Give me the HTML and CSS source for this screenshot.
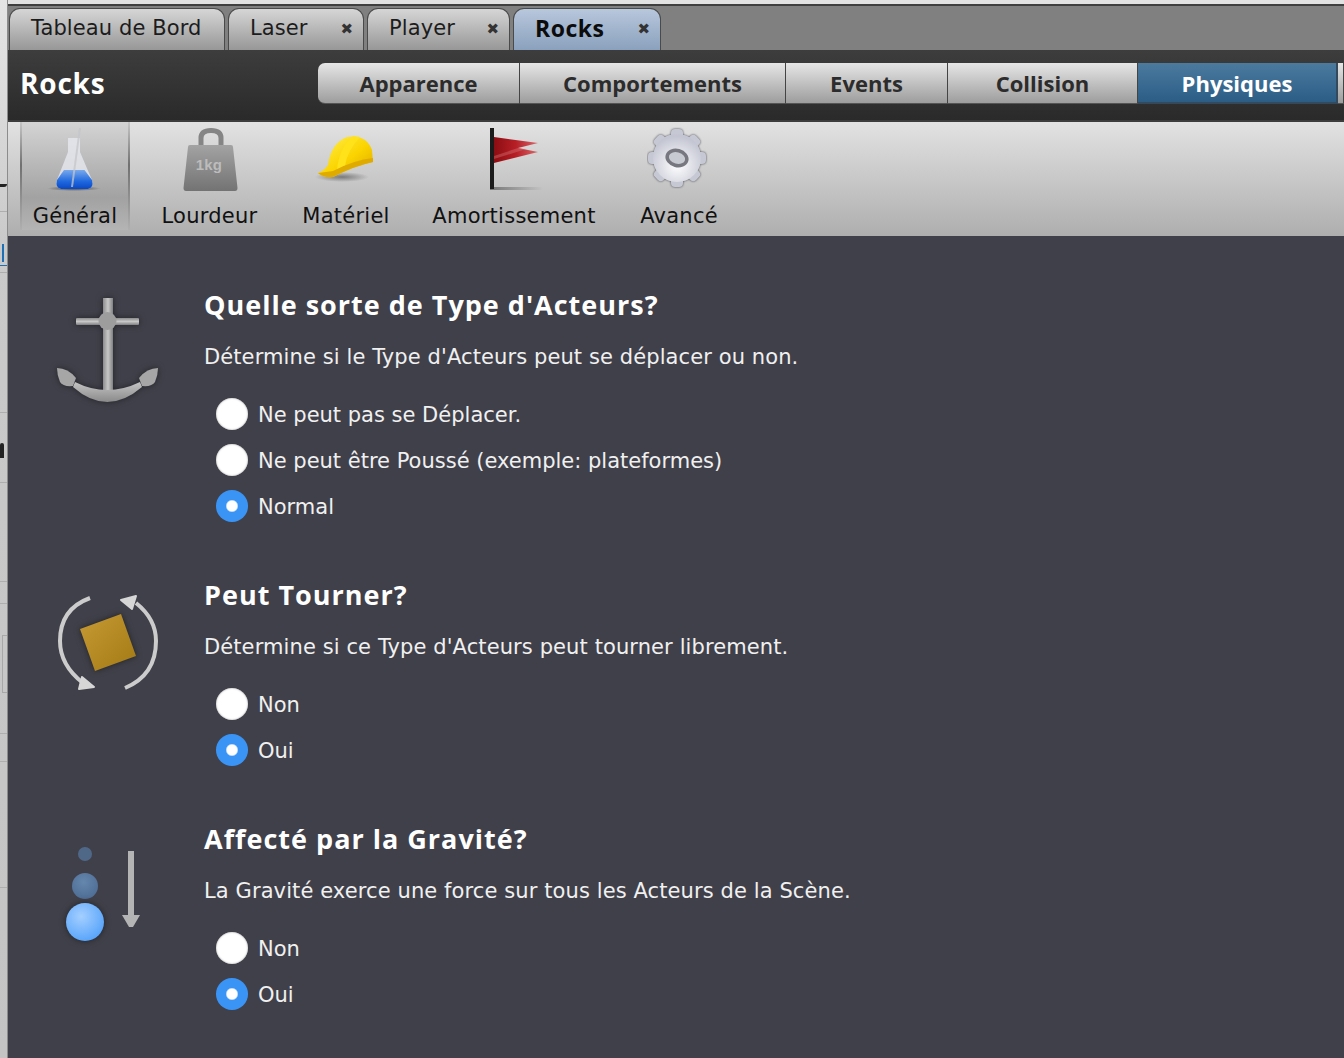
FILE: index.html
```html
<!DOCTYPE html>
<html lang="fr">
<head>
    <meta charset="UTF-8">
    <title>Rocks - Physiques</title>
    <link rel="stylesheet" href="styles.css">
</head>
<body>
    <!-- Strip of the window behind -->
    <div class="behind">
        <span class="behind-line l1"></span>
        <span class="behind-line l2"></span>
        <span class="behind-line l3"></span>
        <span class="behind-line l4"></span>
        <span class="behind-line l5"></span>
        <span class="behind-line l6"></span>
        <span class="behind-line l7"></span>
        <span class="behind-line l8"></span>
        <span class="behind-line l9"></span>
        <span class="behind-box"></span>
        <span class="behind-glyph g1"></span>
        <span class="behind-glyph g2"></span>
        <span class="behind-glyph g3"></span>
        <span class="behind-glyph g4"></span>
    </div>

    <div class="app">
        <!-- Document tabs -->
        <div class="doc-tabs">
            <div class="doc-tab tab-dash"><span>Tableau de Bord</span></div>
            <div class="doc-tab tab-laser"><span>Laser</span><b class="close">✖</b></div>
            <div class="doc-tab tab-player"><span>Player</span><b class="close">✖</b></div>
            <div class="doc-tab tab-rocks active"><span>Rocks</span><b class="close">✖</b></div>
        </div>

        <!-- Title bar -->
        <div class="title-bar">
            <h1>Rocks</h1>
            <div class="segments">
                <div class="segment seg-app">Apparence</div>
                <div class="segment seg-comp">Comportements</div>
                <div class="segment seg-events">Events</div>
                <div class="segment seg-coll">Collision</div>
                <div class="segment seg-phys active">Physiques</div>
                <div class="segment seg-more"></div>
            </div>
        </div>

        <!-- Toolbar -->
        <div class="toolbar">
            <div class="tool tool-general active">
                <svg width="64" height="72" viewBox="0 0 64 72">
                    <defs>
                        <linearGradient id="liquid" x1="0" y1="0" x2="0" y2="1">
                            <stop offset="0" stop-color="#79a9ec"/>
                            <stop offset=".6" stop-color="#1f68de"/>
                            <stop offset="1" stop-color="#0a48c4"/>
                        </linearGradient>
                        <radialGradient id="floor">
                            <stop offset="0" stop-color="#333" stop-opacity=".85"/>
                            <stop offset="1" stop-color="#333" stop-opacity="0"/>
                        </radialGradient>
                    </defs>
                    <ellipse cx="31" cy="62.500" rx="27" ry="2.500" fill="url(#floor)"/>
                    <path d="M25 12 H37 V26 L49 54 Q51 62 45 63 H18 Q12 62 14 54 L25 26Z" fill="#e6e9ef" fill-opacity=".8"/>
                    <path d="M21 44 H41.500 L49 54 Q51 62 45 63 H18 Q12 62 14 54Z" fill="url(#liquid)"/>
                    <path d="M36 2 L38 2 L30 61 L28 61Z" fill="#c4c6ca" fill-opacity=".75"/>
                </svg>
                <span>Général</span>
            </div>
            <div class="tool tool-weight">
                <svg width="64" height="72" viewBox="0 0 64 72">
                    <defs>
                        <linearGradient id="iron" x1="0" y1="0" x2="0" y2="1">
                            <stop offset="0" stop-color="#a3a3a3"/>
                            <stop offset="1" stop-color="#737373"/>
                        </linearGradient>
                    </defs>
                    <path d="M23 20 V12 Q23 4.500 33 4.500 Q43 4.500 43 12 V20" fill="none" stroke="#858585" stroke-width="5"/>
                    <path d="M12 19 H53 Q55 19 55 21 L59.500 62 Q59.500 65 57 65 H8 Q5.500 65 5.500 62 L10 21 Q10 19 12 19Z" fill="url(#iron)"/>
                    <text class="kg" x="31" y="44" text-anchor="middle">1kg</text>
                </svg>
                <span>Lourdeur</span>
            </div>
            <div class="tool tool-mat">
                <svg width="64" height="72" viewBox="0 0 64 72">
                    <defs>
                        <linearGradient id="helmet" x1="0" y1="0" x2="1" y2="1">
                            <stop offset="0" stop-color="#fff04f"/>
                            <stop offset=".55" stop-color="#fbd400"/>
                            <stop offset="1" stop-color="#dba600"/>
                        </linearGradient>
                        <radialGradient id="helmetfloor">
                            <stop offset="0" stop-color="#444" stop-opacity=".6"/>
                            <stop offset="1" stop-color="#444" stop-opacity="0"/>
                        </radialGradient>
                    </defs>
                    <ellipse cx="28" cy="51" rx="27" ry="5" fill="url(#helmetfloor)"/>
                    <path d="M14 39 Q17 17 33 11 Q52 8 58 24 L59 36 Q40 40 19 51 Q9 52 4 47 Q10 45 14 39Z" fill="url(#helmet)"/>
                    <path d="M23 44 Q25 22 39 10 L46 11 Q33 25 31 40Z" fill="#ffe21a"/>
                    <path d="M4 47 Q12 46 19 45 Q40 34 59 32 L59 36 Q40 40 19 51 Q9 52 4 47Z" fill="#e0ab00"/>
                </svg>
                <span>Matériel</span>
            </div>
            <div class="tool tool-flag">
                <svg width="64" height="72" viewBox="0 0 64 72">
                    <defs>
                        <linearGradient id="cloth" x1="0" y1="0" x2="1" y2="0">
                            <stop offset="0" stop-color="#8c0d12"/>
                            <stop offset=".5" stop-color="#b71f26"/>
                            <stop offset="1" stop-color="#d8686b"/>
                        </linearGradient>
                        <linearGradient id="flagfloor" x1="0" y1="0" x2="1" y2="0">
                            <stop offset="0" stop-color="#555" stop-opacity=".7"/>
                            <stop offset="1" stop-color="#555" stop-opacity="0"/>
                        </linearGradient>
                    </defs>
                    <rect x="8" y="61" width="53" height="3" fill="url(#flagfloor)"/>
                    <rect x="8" y="2" width="4" height="61" fill="#1c1c1c"/>
                    <path d="M12 11 L56 17 L36 22 L56 26 L12 37Z" fill="url(#cloth)"/>
                    <path d="M12 30 L36 22 L44 23 L12 33Z" fill="#d9777a" fill-opacity=".4"/>
                </svg>
                <span>Amortissement</span>
            </div>
            <div class="tool tool-adv">
                <svg width="64" height="72" viewBox="0 0 64 72">
                    <defs>
                        <radialGradient id="gearfill" cx=".5" cy=".65" r=".6">
                            <stop offset="0" stop-color="#ffffff"/>
                            <stop offset="1" stop-color="#c3c5d2"/>
                        </radialGradient>
                    </defs>
                    <g class="gear" fill="#c6c8d4">
                        <rect x="1" y="26" width="58" height="12" rx="4"/>
                        <rect x="1" y="26" width="58" height="12" rx="4" transform="rotate(45 30 32)"/>
                        <rect x="1" y="26" width="58" height="12" rx="4" transform="rotate(90 30 32)"/>
                        <rect x="1" y="26" width="58" height="12" rx="4" transform="rotate(135 30 32)"/>
                        <circle cx="30" cy="32" r="24"/>
                    </g>
                    <circle cx="30" cy="32" r="24" fill="url(#gearfill)"/>
                    <ellipse cx="30" cy="32" rx="10" ry="7.500" fill="#c8cad1" stroke="#77787f" stroke-width="3.500" transform="rotate(15 30 32)"/>
                </svg>
                <span>Avancé</span>
            </div>
        </div>

        <!-- Physics options -->
        <div class="content">
            <section class="option opt-type">
                <div class="option-icon">
                    <svg width="110" height="112" viewBox="0 0 110 112">
                        <defs>
                            <linearGradient id="shank" x1="0" y1="0" x2="1" y2="0">
                                <stop offset="0" stop-color="#8c8c8c"/>
                                <stop offset=".5" stop-color="#c8c8c8"/>
                                <stop offset="1" stop-color="#808080"/>
                            </linearGradient>
                            <linearGradient id="bar" x1="0" y1="0" x2="0" y2="1">
                                <stop offset="0" stop-color="#8c8c8c"/>
                                <stop offset=".5" stop-color="#c8c8c8"/>
                                <stop offset="1" stop-color="#808080"/>
                            </linearGradient>
                            <linearGradient id="hook" x1="0" y1="0" x2="0" y2="1">
                                <stop offset="0" stop-color="#c4c4c4"/>
                                <stop offset="1" stop-color="#8a8a8a"/>
                            </linearGradient>
                        </defs>
                        <g class="soft">
                            <rect x="24" y="21" width="63" height="7" rx="1" fill="url(#bar)"/>
                            <rect x="51" y="1" width="10" height="92" fill="url(#shank)"/>
                            <circle cx="55.500" cy="24" r="9" fill="#9d9d9d"/>
                            <path d="M23 85 Q55 101 88 85 L90 90 Q55 120 21 90Z" fill="url(#hook)"/>
                            <path d="M5 71 Q16 71 24 81 L21 89 Q11 90 8 85 Q5 78 5 71Z" fill="#a6a6a6"/>
                            <path d="M106 71 Q95 71 87 81 L90 89 Q100 90 103 85 Q106 78 106 71Z" fill="#a6a6a6"/>
                        </g>
                    </svg>
                </div>
                <div class="option-body">
                    <h2>Quelle sorte de Type d'Acteurs?</h2>
                    <p>Détermine si le Type d'Acteurs peut se déplacer ou non.</p>
                    <div class="radios">
                        <label class="radio"><i class="dot"></i>Ne peut pas se Déplacer.</label>
                        <label class="radio"><i class="dot"></i>Ne peut être Poussé (exemple: plateformes)</label>
                        <label class="radio"><i class="dot on"></i>Normal</label>
                    </div>
                </div>
            </section>

            <section class="option opt-rotate">
                <div class="option-icon">
                    <svg width="110" height="110" viewBox="0 0 110 110">
                        <defs>
                            <linearGradient id="crate" x1="0" y1="0" x2="1" y2="1">
                                <stop offset="0" stop-color="#c69a35"/>
                                <stop offset="1" stop-color="#a37a14"/>
                            </linearGradient>
                        </defs>
                        <path d="M38 11 Q8 22 8 54 Q8 78 31 96" fill="none" stroke="#cccccc" stroke-width="4"/>
                        <path d="M73 101 Q104 88 104 54 Q104 32 84 16" fill="none" stroke="#cccccc" stroke-width="4"/>
                        <path class="head" d="M42 100 L30 90 L27 102Z"/>
                        <path class="head" d="M69 13 L84 9 L80 22Z"/>
                        <path class="soft" d="M28 42 L69 27 L84 69 L43 84Z" fill="url(#crate)"/>
                    </svg>
                </div>
                <div class="option-body">
                    <h2>Peut Tourner?</h2>
                    <p>Détermine si ce Type d'Acteurs peut tourner librement.</p>
                    <div class="radios">
                        <label class="radio"><i class="dot"></i>Non</label>
                        <label class="radio"><i class="dot on"></i>Oui</label>
                    </div>
                </div>
            </section>

            <section class="option opt-gravity">
                <div class="option-icon">
                    <svg width="110" height="118" viewBox="0 0 110 118">
                        <defs>
                            <radialGradient id="ball1" cx=".4" cy=".35" r=".7">
                                <stop offset="0" stop-color="#a4cfff"/>
                                <stop offset="1" stop-color="#55a3fa"/>
                            </radialGradient>
                            <radialGradient id="ball2" cx=".45" cy=".35" r=".7">
                                <stop offset="0" stop-color="#6586ad"/>
                                <stop offset="1" stop-color="#4d6c94"/>
                            </radialGradient>
                        </defs>
                        <circle cx="33" cy="23" r="7" fill="#4f6888"/>
                        <circle cx="33" cy="55" r="13" fill="url(#ball2)"/>
                        <circle class="soft" cx="33" cy="91" r="19" fill="url(#ball1)"/>
                        <rect x="76" y="20" width="6" height="64" fill="#b4b4b4"/>
                        <path d="M70 84 H88 L81 96 H77Z" fill="#b4b4b4"/>
                    </svg>
                </div>
                <div class="option-body">
                    <h2>Affecté par la Gravité?</h2>
                    <p>La Gravité exerce une force sur tous les Acteurs de la Scène.</p>
                    <div class="radios">
                        <label class="radio"><i class="dot"></i>Non</label>
                        <label class="radio"><i class="dot on"></i>Oui</label>
                    </div>
                </div>
            </section>
        </div>
    </div>
</body>
</html>
```

FILE: styles.css
```css
* {
    box-sizing: border-box;
}

html, body {
    margin: 0;
    padding: 0;
    height: 1058px;
    overflow: hidden;
}

body {
    display: flex;
    background-color: #e2e2e2;
    font-family: "DejaVu Sans", sans-serif;
}

/* Strip of the window behind */
.behind {
    position: relative;
    width: 8px;
    flex: none;
    background: linear-gradient(#e4e4e4 0, #dcdcdc 90px, #cacaca 240px, #c4c4c4);
    border-right: 1px solid #8c8c8c;
}

.behind-line {
    position: absolute;
    left: 0;
    width: 7px;
    height: 1px;
    background-color: #aeaeae;
}

.l1 { top: 211px; }
.l2 { top: 272px; }
.l3 { top: 412px; }
.l4 { top: 482px; }
.l5 { top: 581px; }
.l6 { top: 603px; }
.l7 { top: 733px; }
.l8 { top: 761px; }
.l9 { top: 887px; }

.behind-box {
    position: absolute;
    top: 635px;
    left: 2px;
    width: 5px;
    height: 58px;
    border: 1px solid #a8a8a8;
    border-right: 0;
}

.behind-glyph {
    position: absolute;
    background-color: #222;
}

.g1 { top: 184px; left: 0; width: 7px; height: 3px; border-radius: 0 0 4px 0; }
.g2 { top: 244px; left: 2px; width: 2px; height: 18px; background-color: #1f6fb5; }
.g3 { top: 265px; left: 0; width: 7px; height: 1px; background-color: #1f6fb5; }
.g4 { top: 443px; left: 0; width: 4px; height: 15px; border-radius: 2px 2px 0 0; }

.app {
    flex: 1;
    min-width: 0;
    display: flex;
    flex-direction: column;
}

/* Document tabs */
.doc-tabs {
    height: 46px;
    margin-top: 4px;
    border-top: 2px solid #3f3f3f;
    background-color: #808080;
    display: flex;
    gap: 3px;
    padding: 2px 0 0 1px;
}

.doc-tab {
    height: 42px;
    display: flex;
    align-items: center;
    justify-content: space-between;
    padding: 0 10px 4px 21px;
    border-radius: 11px 11px 0 0;
    background: linear-gradient(#d6d6d6, #979797);
    border: 1px solid #4a4a4a;
    border-bottom: 0;
    font-size: 21px;
    letter-spacing: .1px;
    color: #1c1c1c;
}

.tab-dash { width: 216px; }
.tab-laser { width: 136px; }
.tab-player { width: 143px; }
.tab-rocks { width: 148px; }

.doc-tab.active {
    background: linear-gradient(#b8c7dc, #8aa1bd);
    color: #0c0c0c;
    font-family: "Open Sans", sans-serif;
    font-weight: bold;
    font-size: 23px;
    letter-spacing: .5px;
}

.close {
    margin-top: 2px;
    font-family: "DejaVu Sans", sans-serif;
    font-size: 15px;
    color: #333;
    font-weight: bold;
    letter-spacing: 0;
}

/* Title bar */
.title-bar {
    height: 72px;
    display: flex;
    align-items: flex-start;
    background: linear-gradient(#3d3d3d, #2a2a2a);
    border-bottom: 2px solid #3c3c3c;
}

.title-bar h1 {
    margin: 0;
    width: 310px;
    padding: 15px 0 0 12px;
    font-family: "Open Sans", sans-serif;
    font-size: 28px;
    line-height: 36px;
    letter-spacing: .8px;
    color: #fff;
    font-weight: bold;
}

.segments {
    display: flex;
    margin-top: 13px;
}

.segment {
    height: 41px;
    display: flex;
    align-items: center;
    justify-content: center;
    background: linear-gradient(#e6e6e6, #9d9d9d);
    border-right: 1px solid #444;
    border-bottom: 1px solid #555;
    font-family: "Open Sans", sans-serif;
    font-size: 22px;
    font-weight: bold;
    color: #2c2c2c;
}

.seg-app { width: 202px; border-radius: 7px 0 0 7px; }
.seg-comp { width: 266px; }
.seg-events { width: 162px; }
.seg-coll { width: 190px; }
.seg-phys { width: 200px; }
.seg-more { width: 6px; }

.segment.active {
    background: linear-gradient(#4c7a9f, #2b5d85);
    border-right: 2px solid #34495c;
    border-bottom: 2px solid #34495c;
    color: #fff;
}

/* Toolbar */
.toolbar {
    height: 114px;
    display: flex;
    padding-left: 12px;
    background: linear-gradient(#e2e2e2, #aeaeae);
}

.tool {
    display: flex;
    flex-direction: column;
    align-items: center;
    font-size: 21px;
    letter-spacing: .25px;
    color: #111;
    line-height: 26px;
}

.tool svg {
    display: block;
    margin: 4px 0 5px;
}

.tool-general { width: 110px; }
.tool-weight { width: 159px; }
.tool-mat { width: 114px; }
.tool-flag { width: 222px; }
.tool-adv { width: 108px; }

.tool.active {
    height: 108px;
    background: linear-gradient(#d4d4d4, #a2a2a2 70%, #b4b4b4);
    border-style: solid;
    border-width: 0 2px;
    border-image: linear-gradient(#c8c8c8, #707070 40%, #b0b0b0) 1;
}

.gear {
    filter: drop-shadow(0 0 1px #44454c);
}

/* Physics options */
.content {
    flex: 1;
    background-color: #40404a;
}

.option {
    display: flex;
}

.opt-type { padding-top: 51px; }
.opt-rotate { padding-top: 48px; }
.opt-gravity { padding-top: 48px; }

.option-icon {
    width: 196px;
    padding: 10px 0 0 44px;
    flex: none;
}

.option-icon svg {
    display: block;
    overflow: visible;
}

.soft {
    filter: drop-shadow(0 0 3px #222228);
}

.head {
    fill: #d6d6d6;
    stroke: #d6d6d6;
    stroke-width: 2;
    stroke-linejoin: round;
}

.option-body h2 {
    margin: -2px 0 0;
    font-family: "Open Sans", sans-serif;
    font-size: 27px;
    line-height: 40px;
    letter-spacing: 1px;
    font-weight: bold;
    color: #fff;
}

.option-body p {
    margin: 17px 0 0;
    font-size: 21px;
    line-height: 30px;
    letter-spacing: .1px;
    color: #f0f0f0;
}

.radios {
    margin-top: 19px;
    padding-left: 12px;
}

.radio {
    display: flex;
    align-items: center;
    gap: 10px;
    height: 46px;
    padding-top: 2px;
    font-size: 21px;
    color: #f0f0f0;
}

.dot {
    width: 32px;
    height: 32px;
    margin-top: -2px;
    border-radius: 50%;
    background-color: #fff;
    box-shadow: inset 0 0 2px #999;
    flex: none;
}

.dot.on {
    background: radial-gradient(circle, #fff 0, #fff 5px, #3a94f6 6.500px);
    box-shadow: none;
}

.kg {
    font-family: "Liberation Sans", sans-serif;
    font-size: 15px;
    font-weight: bold;
    fill: #bcbcbc;
}
```
